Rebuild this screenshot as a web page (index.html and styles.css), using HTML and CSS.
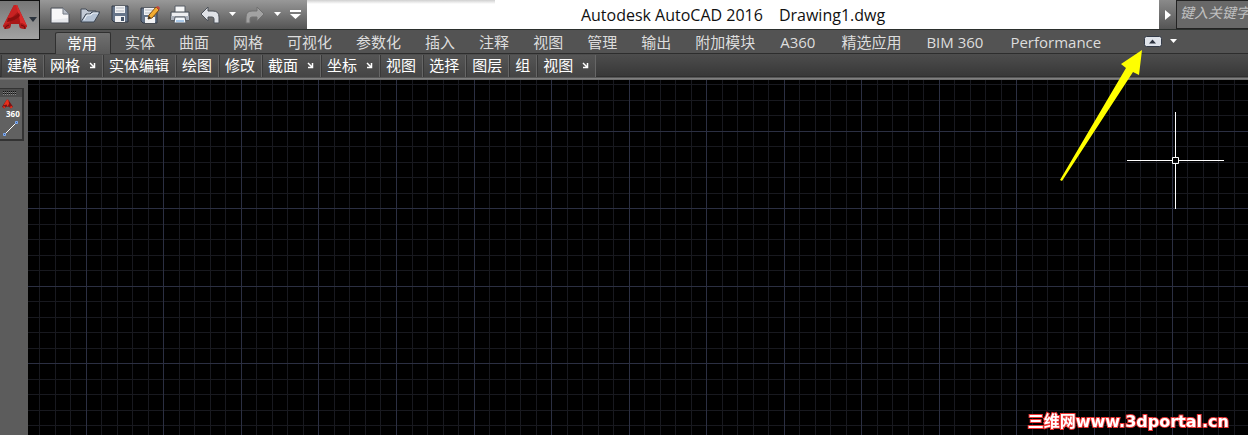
FILE: index.html
```
<!DOCTYPE html>
<html lang="zh-CN">
<head>
<meta charset="UTF-8">
<meta name="viewport" content="width=device-width, initial-scale=1.0">
<title>Autodesk AutoCAD 2016 - Drawing1.dwg</title>
<link rel="stylesheet" href="styles.css">
</head>
<body>
<button class="app-btn" aria-label="AutoCAD">
  <svg width="38" height="38" viewBox="0 0 38 38">
    <path d="M14 4h3l10 21-2 3-5-1-1-4h-8l-1 4-5 1-2-3z" fill="#a81717"/>
    <path d="M14 4h3l2 6-8 7-3 9-5-1z" fill="#c82222"/>
    <path d="M16 4h1l10 21-2 3-4-2-2-11z" fill="#d92b2b"/>
    <path d="M8 17q6 0 11-5l1 3q-5 5-13 6z" fill="#8b0f0f"/>
    <path d="M3 25l5-3 3 1-1 4-5 1zM27 25l-5-3-3 1 1 4 5 1z" fill="#b01a1a"/>
    <path d="M5 28q0-3 4-4M25 28q1-3-4-4" fill="none" stroke="#700b0b"/>
    <path d="M29 16h8l-4 5z" fill="#2c343e"/>
  </svg>
</button>

<header class="titlebar">
  <div class="quick">
    <button class="tool" aria-label="新建">
      <svg width="20" height="20" viewBox="0 0 20 20"><path d="M1 3h12l6 6v9H1z" fill="#e6e8ec" stroke="#4a4f57"/><path d="M2 4h11v6h5v3L2 15z" fill="#f7f7f8"/><path d="M13 3v6h6z" fill="#bac0ca" stroke="#747a84"/></svg>
    </button>
    <button class="tool" aria-label="打开">
      <svg width="20" height="20" viewBox="0 0 20 20"><path d="M1 17V4h5l2 2h8v3" fill="#c2cad6" stroke="#424a56"/><path d="M1 17L6 9h4l2-2h8l-6 10z" fill="#b5c3d5" stroke="#3d4653"/><path d="M4 15l3-5h4l2-2h5" fill="none" stroke="#edf2f8"/></svg>
    </button>
    <button class="tool" aria-label="保存">
      <svg width="20" height="20" viewBox="0 0 20 20"><path d="M2 1h16v16H4l-2-2z" fill="#66758a" stroke="#323a46"/><path d="M5 1h10v7H5zM5 11h10v6H5z" fill="#f1f2f4"/><path d="M6 3h8M6 6h8" stroke="#b5bac2"/><path d="M11 12h3v4h-3z" fill="#46556b"/></svg>
    </button>
    <button class="tool" aria-label="另存为">
      <svg width="20" height="20" viewBox="0 0 20 20"><path d="M1 3h16v15H3l-2-2z" fill="#66758a" stroke="#323a46"/><path d="M4 3h11v7H4zM5 12h10v6H5z" fill="#f1f2f4"/><path d="M5 5h8M5 8h6" stroke="#b5bac2"/><path d="M8 14l1-4 7-8 3 3-7 8z" fill="#f3ad32" stroke="#7a4a10"/><path d="M16 2l3 3 1-2-2-2z" fill="#c8443a"/><path d="M8 14l1-3 2 2z" fill="#333"/></svg>
    </button>
    <button class="tool" aria-label="打印">
      <svg width="20" height="20" viewBox="0 0 20 20"><path d="M5 8V1h10v7z" fill="#f6f7f8" stroke="#555b63"/><path d="M1 7h18v8H1z" fill="#d5d8dd" stroke="#464c55"/><path d="M1 11h18v4H1z" fill="#aab0ba"/><path d="M2 8h16v3H2z" fill="#edeef0"/><path d="M5 12h10l1 6H4z" fill="#f5f9fd" stroke="#555b63"/><path d="M6 15h8v2H6z" fill="#a9c9ea"/></svg>
    </button>
    <button class="tool" aria-label="放弃">
      <svg width="20" height="20" viewBox="0 0 20 20"><path d="M1 9l7-7v4h5q6 0 6 6v6h-5v-4q0-2-2-2H8v4z" fill="#dfe2e7" stroke="#4b5058"/></svg>
    </button>
    <button class="drop" aria-label="放弃列表"><svg width="7" height="5" viewBox="0 0 7 5"><path d="M0 0h7L3.500 4z" fill="#fff"/></svg></button>
    <button class="tool" aria-label="重做">
      <svg width="20" height="20" viewBox="0 0 20 20"><path d="M19 9l-7-7v4H7q-6 0-6 6v6h4v-4q0-2 2-2h5v4z" fill="#a2a2a2" stroke="#707070"/></svg>
    </button>
    <button class="drop" aria-label="重做列表"><svg width="7" height="5" viewBox="0 0 7 5"><path d="M0 0h7L3.500 4z" fill="#fff"/></svg></button>
    <button class="drop more" aria-label="自定义快速访问工具栏"><svg width="11" height="10" viewBox="0 0 11 10"><path d="M0 0h11v2H0zM0 4h11L5.500 9z" fill="#fff"/></svg></button>
  </div>
  <div class="title"><span>Autodesk AutoCAD 2016</span><span>Drawing1.dwg</span></div>
  <button class="search-toggle" aria-label="展开搜索"><svg width="6" height="10" viewBox="0 0 6 10"><path d="M0 0l6 5-6 5z" fill="#fff"/></svg></button>
  <input class="search" type="text" placeholder="键入关键字或短语" aria-label="搜索">
</header>

<nav class="tabs">
  <button class="tab active">常用</button>
  <button class="tab">实体</button>
  <button class="tab">曲面</button>
  <button class="tab">网格</button>
  <button class="tab">可视化</button>
  <button class="tab">参数化</button>
  <button class="tab">插入</button>
  <button class="tab">注释</button>
  <button class="tab">视图</button>
  <button class="tab">管理</button>
  <button class="tab">输出</button>
  <button class="tab">附加模块</button>
  <button class="tab latin">A360</button>
  <button class="tab">精选应用</button>
  <button class="tab latin">BIM 360</button>
  <button class="tab latin">Performance</button>
  <button class="minimize" aria-label="最小化功能区">
    <svg width="18" height="11" viewBox="0 0 18 11"><rect x=".5" y=".5" width="17" height="10" rx="2" fill="#dfe3ea" stroke="#333a47"/><path d="M5 7.500h7L8.500 3.500z" fill="#2e3440"/></svg>
  </button>
  <button class="drop" aria-label="功能区选项"><svg width="7" height="5" viewBox="0 0 7 5"><path d="M0 0h7L3.500 4z" fill="#fff"/></svg></button>
</nav>

<div class="panels">
  <button class="panel">建模</button>
  <button class="panel launch">网格<svg class="corner" width="7" height="7" viewBox="0 0 7 7"><path d="M1 1l4 4M5.500 1v4.500H1"/></svg></button>
  <button class="panel">实体编辑</button>
  <button class="panel">绘图</button>
  <button class="panel">修改</button>
  <button class="panel launch">截面<svg class="corner" width="7" height="7" viewBox="0 0 7 7"><path d="M1 1l4 4M5.500 1v4.500H1"/></svg></button>
  <button class="panel launch">坐标<svg class="corner" width="7" height="7" viewBox="0 0 7 7"><path d="M1 1l4 4M5.500 1v4.500H1"/></svg></button>
  <button class="panel">视图</button>
  <button class="panel">选择</button>
  <button class="panel">图层</button>
  <button class="panel">组</button>
  <button class="panel launch">视图<svg class="corner" width="7" height="7" viewBox="0 0 7 7"><path d="M1 1l4 4M5.500 1v4.500H1"/></svg></button>
</div>

<main class="workspace">
  <aside class="side">
    <div class="palette">
      <svg class="grip" width="22" height="8" viewBox="0 0 22 8"><path d="M0 0h22v8H0z" fill="#4c4c4c"/><path d="M3 2.500h13M3 4.500h13" stroke="#111" stroke-dasharray="1 1"/><path d="M3 3.500h13M3 5.500h13" stroke="#888" stroke-dasharray="1 1"/></svg>
      <button class="side-btn" aria-label="A360">
        <svg width="11" height="11" viewBox="0 0 14 12"><path d="M6 0h2l6 9-3 2-2-2H5l-2 2-3-2z" fill="#7d1212"/><path d="M6 0L2 7l4-1 1 3 2-4-1-5z" fill="#e8301c"/><path d="M1 9l2-1 1 2-1 1zM10 9l3-1v2l-2 1z" fill="#e8301c"/></svg>
        <span>360</span>
      </button>
      <button class="side-btn" aria-label="直线">
        <svg width="17" height="17" viewBox="0 0 17 17"><path d="M2 15L15 2" stroke="#fff"/><path d="M1.500 13.500h2v2h-2zM13.500 1.500h2v2h-2z" fill="#355c9c" stroke="#7eaaf0"/></svg>
      </button>
    </div>
  </aside>
  <div class="drawing">
    <canvas id="grid"></canvas>
    <svg class="cursor" width="97" height="97" viewBox="0 0 97 97"><path d="M0 48.500h45M52 48.500h45M48.500 0v45M48.500 52v45M45.500 45.500h6v6h-6z" fill="none" stroke="#fff"/></svg>
    <a class="site" href="#">三维网www.3dportal.cn</a>
  </div>
</main>

<svg class="pointer" width="84" height="134" viewBox="0 0 84 134"><path d="M82 2L61 16l5 4L0 132l2 1L73 24l6 3z" fill="#ff0"/></svg>

<script src="grid.js"></script>
</body>
</html>
```
FILE: styles.css
```
*{box-sizing:border-box}
body{margin:0;height:100vh;display:flex;flex-direction:column;overflow:hidden;position:relative;background:#5c5c5c;color:#fff;font:15px/20px "Open Sans","Noto Sans CJK SC",sans-serif}
button{margin:0;padding:0;border:0;background:none;color:inherit;font:inherit;white-space:nowrap}
svg{display:block;flex:none}

.app-btn{position:absolute;left:0;top:0;z-index:2;width:40px;height:40px;border:1px solid #111;border-left:0;background:linear-gradient(#777,#a2a2a2)}

/* title bar */
.titlebar{display:flex;height:30px;flex:none;border-bottom:1px solid #2b2f2d;background:#fff}
.quick{display:flex;align-items:center;padding-left:45px;width:307px;flex:none;background:linear-gradient(#989898,#555)}
.tool{width:30px;height:28px;display:flex;align-items:center;justify-content:center}
.drop{width:15px;height:28px;display:flex;align-items:center;justify-content:center}
.more{width:20px}
.title{flex:1;display:flex;justify-content:center;align-items:center;gap:16px;color:#111;font-size:16px;background:linear-gradient(#d0d0d0,#fff) no-repeat 0 0/188px 4px}
.search-toggle{width:17px;display:flex;align-items:center;justify-content:center;background:linear-gradient(#8a8a8a,#555)}
.search{width:72px;border:1px solid #222;border-right:0;border-radius:0;padding:0 0 3px 3px;background:#686868;color:#fff;font:italic 14px/20px "Open Sans","Noto Sans CJK SC",sans-serif;outline:0}
.search::placeholder{color:#c0c0c0}

/* ribbon */
.tabs{display:flex;align-items:flex-end;height:24px;flex:none;padding-left:55px;background:#535353;border-bottom:1px solid #2d2d2d}
.tab{height:23px;padding:0 12px;color:#ddd}
.latin{padding:0 14px 0 13px}
.active{height:22px;margin:0 2px -1px 1px;padding:0 13px 2px 11px;border:1px solid #303030;border-width:1px 1px 0 0;border-radius:2px 2px 0 0;box-shadow:-1px 0 #303030;background:linear-gradient(#707070,#5a5a5a);color:#fff}
.minimize{height:23px;margin:0 4px 0 29px;display:flex;align-items:center}
.tabs .drop{height:23px}
.panels{display:flex;height:26px;flex:none;padding:1px 0 0 1px;background:linear-gradient(#4d4d4d,#383838 22px,#262626 23px,#888 24px,#666)}
.panel{height:22px;padding:0 6px 2px;border-right:1px solid #666;box-shadow:inset 1px 0 #383838;background:linear-gradient(#555,#444)}
.launch{display:flex;align-items:center;gap:9px}
.corner path{fill:none;stroke:#fff;stroke-width:1.5}

/* drawing area */
.workspace{flex:1;display:flex;min-height:0}
.side{width:28px;flex:none;padding-top:8px;background:#5c5c5c}
.palette{width:24px;padding-bottom:2px;border:1px solid #333;border-width:1px 2px 2px 0;background:#616161}
.side-btn{display:block;padding:2px 0 0 2px;text-align:left}
.side-btn span{display:block;padding-left:4px;font:bold 8px/8px "Open Sans",sans-serif}
.drawing{flex:1;position:relative;overflow:hidden;background:#000}
#grid{display:block;width:100%;height:100%}
.cursor{position:absolute;left:1099px;top:32px}
.site{position:absolute;right:19px;bottom:4px;color:#fff;font:bold 16px/18px "DejaVu Sans","Noto Sans CJK SC",sans-serif;text-decoration:none;-webkit-text-stroke:2px #e33;paint-order:stroke fill}
.pointer{position:absolute;left:1060px;top:48px;z-index:3}
```
FILE: grid.js
```
const canvas = document.getElementById('grid');
const STEP = 15.51;

function drawGrid() {
  const w = canvas.width = canvas.clientWidth;
  const h = canvas.height = canvas.clientHeight;
  const ctx = canvas.getContext('2d');

  // minor lines first, every fifth one is major
  for (const major of [false, true]) {
    ctx.fillStyle = major ? '#2b2f42' : '#18191f';
    for (let i = -3; 58.3 + i * STEP < w; i++) {
      if ((i % 5 === 0) === major) ctx.fillRect(Math.floor(58.3 + i * STEP), 0, 1, h);
    }
    for (let i = -3; 51.3 + i * STEP < h; i++) {
      if ((i % 5 === 0) === major) ctx.fillRect(0, Math.floor(51.3 + i * STEP), w, 1);
    }
  }
}

window.addEventListener('resize', drawGrid);
drawGrid();
```
